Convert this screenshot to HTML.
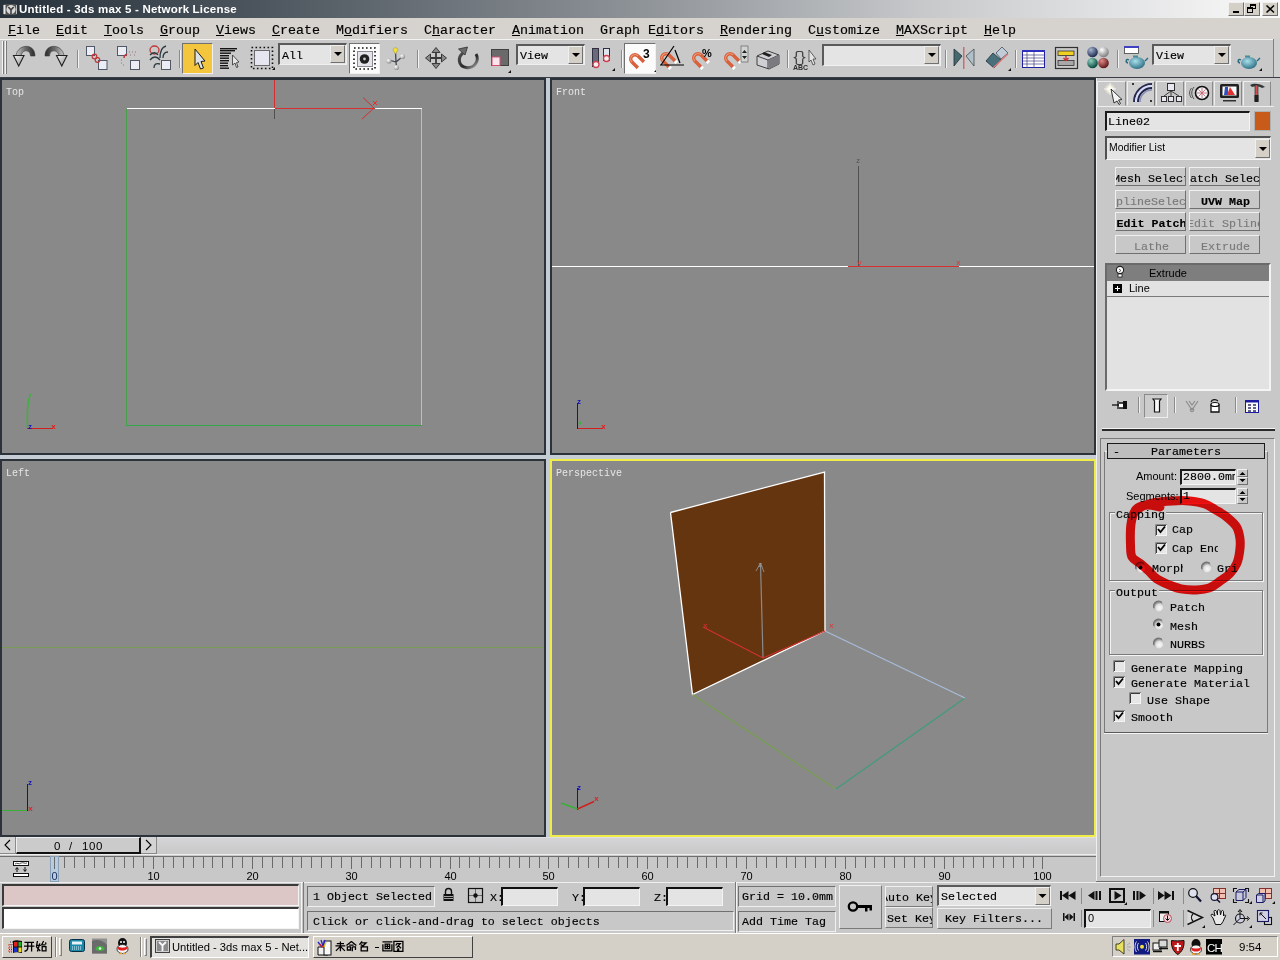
<!DOCTYPE html>
<html><head><meta charset="utf-8"><style>
html,body{margin:0;padding:0;}
body{width:1280px;height:960px;overflow:hidden;position:relative;background:#c8c8c8;font-family:"Liberation Sans",sans-serif;}
.a{position:absolute;}
.m{font-family:"Liberation Mono",monospace;white-space:pre;-webkit-text-stroke:0.15px currentColor;}
.s{font-family:"Liberation Sans",sans-serif;white-space:pre;}
.vp{position:absolute;background:#898989;border:2px solid #2c3239;box-sizing:border-box;}
.lbl{position:absolute;color:#e6e6e6;font-family:"Liberation Mono",monospace;font-size:10px;line-height:10px;}
.btn3d{position:absolute;box-sizing:border-box;background:#c8c8c8;border:1px solid;border-color:#f0f0f0 #707070 #707070 #f0f0f0;}
.sunk{position:absolute;box-sizing:border-box;border:1px solid;border-color:#606060 #f4f4f4 #f4f4f4 #606060;}
.sep{position:absolute;width:1px;border-left:1px solid #8a8a8a;border-right:1px solid #f4f4f4;}
u{text-decoration:underline;text-underline-offset:1px;text-decoration-thickness:1px;}
svg{position:absolute;overflow:visible;}
</style></head><body>

<!-- TITLE BAR -->
<div class="a" style="left:0;top:0;width:1280px;height:18px;background:linear-gradient(to right,#26313b 0%,#4c555d 20%,#8e9398 50%,#c6c8ca 72%,#fafafa 100%);"></div>
<svg style="left:2px;top:3px" width="16" height="13"><rect x="1" y="1" width="14" height="11" rx="2" fill="#505050"/><rect x="1.5" y="2" width="2" height="9" fill="#e8e8e8"/><circle cx="9" cy="6.5" r="4.6" fill="#d8d8d8"/><path d="M6.3 4 L9 6.8 L11.7 4 M9 6.8 V11" stroke="#404040" stroke-width="1.6" fill="none"/><rect x="14" y="2" width="1" height="9" fill="#c0c0c0"/></svg>
<div class="a s" style="left:19px;top:2px;font-size:11.5px;letter-spacing:0.2px;line-height:14px;font-weight:bold;color:#fff;">Untitled - 3ds max 5 - Network License</div>
<div class="btn3d" style="left:1228px;top:2px;width:16px;height:14px;background:#d4d0c8;"><div class="a" style="left:4px;top:8px;width:6px;height:2px;background:#000"></div></div>
<div class="btn3d" style="left:1244px;top:2px;width:16px;height:14px;background:#d4d0c8;"><div class="a" style="left:5px;top:1px;width:6px;height:5px;border:1px solid #000;border-top-width:2px;box-sizing:border-box"></div><div class="a" style="left:2px;top:4px;width:6px;height:6px;border:1px solid #000;border-top-width:2px;box-sizing:border-box;background:#d4d0c8"></div></div>
<div class="btn3d" style="left:1262px;top:2px;width:16px;height:14px;background:#d4d0c8;"><svg style="left:3px;top:2px" width="9" height="8"><path d="M0.5 0.5 L8 7.5 M8 0.5 L0.5 7.5" stroke="#000" stroke-width="1.6"/></svg></div>

<!-- MENU BAR -->
<div class="a" style="left:0;top:18px;width:1280px;height:21px;background:#d6d3ce;"></div>
<div class="a m" style="left:8px;top:23px;font-size:13.33px;line-height:16px;color:#000;"><u>F</u>ile  <u>E</u>dit  <u>T</u>ools  <u>G</u>roup  <u>V</u>iews  <u>C</u>reate  M<u>o</u>difiers  C<u>h</u>aracter  <u>A</u>nimation  Graph E<u>d</u>itors  <u>R</u>endering  C<u>u</u>stomize  <u>M</u>AXScript  <u>H</u>elp</div>

<!-- TOOLBAR -->
<div class="a" style="left:0;top:39px;width:1280px;height:38px;background:#c9c9c9;border-top:1px solid #f2f2f2;box-sizing:border-box;"></div>
<div class="a" style="left:0;top:77px;width:1280px;height:1px;background:#3a3d44;"></div>


<!-- toolbar boxes -->
<div class="a" style="left:182px;top:43px;width:31px;height:31px;background:#f4c63e;border:1px solid;border-color:#707070 #f0f0f0 #f0f0f0 #707070;box-sizing:border-box;"></div>
<div class="a" style="left:349px;top:43px;width:31px;height:31px;background:#fbfbfb;border:1px solid;border-color:#707070 #f0f0f0 #f0f0f0 #707070;box-sizing:border-box;"></div>
<div class="a" style="left:624px;top:43px;width:32px;height:31px;background:#fbfbfb;border:1px solid;border-color:#707070 #f0f0f0 #f0f0f0 #707070;box-sizing:border-box;"></div>
<div class="sunk" style="left:278px;top:43px;width:69px;height:22px;background:#e4e4e4;border-width:2px 1px 1px 2px;border-color:#5a5a5a #f0f0f0 #f0f0f0 #5a5a5a;"></div>
<div class="a m" style="left:282px;top:49px;font-size:11.67px;line-height:14px;">All</div>
<div class="btn3d" style="left:330px;top:45px;width:15px;height:18px;background:#d4d0c8;"></div>
<div class="sunk" style="left:516px;top:44px;width:69px;height:21px;background:#e4e4e4;border-width:2px 1px 1px 2px;border-color:#5a5a5a #f0f0f0 #f0f0f0 #5a5a5a;"></div>
<div class="a m" style="left:520px;top:49px;font-size:11.67px;line-height:14px;">View</div>
<div class="btn3d" style="left:568px;top:46px;width:15px;height:18px;background:#d4d0c8;"></div>
<div class="sunk" style="left:822px;top:44px;width:119px;height:22px;background:#e4e4e4;border-width:2px 1px 1px 2px;border-color:#5a5a5a #f0f0f0 #f0f0f0 #5a5a5a;"></div>
<div class="btn3d" style="left:924px;top:46px;width:15px;height:18px;background:#d4d0c8;"></div>
<div class="sunk" style="left:1152px;top:44px;width:79px;height:21px;background:#e4e4e4;border-width:2px 1px 1px 2px;border-color:#5a5a5a #f0f0f0 #f0f0f0 #5a5a5a;"></div>
<div class="a m" style="left:1156px;top:49px;font-size:11.67px;line-height:14px;">View</div>
<div class="btn3d" style="left:1214px;top:46px;width:15px;height:18px;background:#d4d0c8;"></div>
<div class="a" style="left:1273px;top:39px;width:1px;height:38px;background:#808080;"></div>
<div class="a" style="left:1274px;top:39px;width:6px;height:38px;background:#d0d0d0;"></div>

<svg style="left:0;top:0" width="1280" height="80">
<defs>
<linearGradient id="gArc" x1="0" y1="0" x2="0" y2="1"><stop offset="0" stop-color="#9a9a9a"/><stop offset="1" stop-color="#3a3a3a"/></linearGradient>
<radialGradient id="gBall" cx="0.35" cy="0.35" r="0.7"><stop offset="0" stop-color="#fff"/><stop offset="1" stop-color="#8a8a8a"/></radialGradient>
<radialGradient id="gB1" cx="0.35" cy="0.3" r="0.7"><stop offset="0" stop-color="#a8b4d0"/><stop offset="1" stop-color="#1e2c50"/></radialGradient>
<radialGradient id="gB2" cx="0.35" cy="0.3" r="0.7"><stop offset="0" stop-color="#ffffff"/><stop offset="1" stop-color="#808080"/></radialGradient>
<radialGradient id="gB3" cx="0.35" cy="0.3" r="0.7"><stop offset="0" stop-color="#8fd0c0"/><stop offset="1" stop-color="#0a4a40"/></radialGradient>
<radialGradient id="gB4" cx="0.35" cy="0.3" r="0.7"><stop offset="0" stop-color="#e08a8a"/><stop offset="1" stop-color="#601818"/></radialGradient>
<radialGradient id="gTea" cx="0.4" cy="0.35" r="0.7"><stop offset="0" stop-color="#a8e0ec"/><stop offset="1" stop-color="#2a6a80"/></radialGradient>
</defs>
<!-- grip -->
<rect x="2" y="41" width="1" height="33" fill="#f4f4f4"/><rect x="3" y="41" width="1" height="33" fill="#7a7a7a"/>
<rect x="5" y="41" width="1" height="33" fill="#f4f4f4"/><rect x="6" y="41" width="1" height="33" fill="#7a7a7a"/>
<!-- separators -->
<g fill="#8a8a8a"><rect x="77" y="50" width="1" height="18"/><rect x="179" y="50" width="1" height="18"/><rect x="417" y="50" width="1" height="18"/><rect x="621" y="50" width="1" height="18"/><rect x="787" y="50" width="1" height="18"/><rect x="945" y="50" width="1" height="18"/><rect x="1015" y="50" width="1" height="18"/><rect x="1117" y="50" width="1" height="18"/></g>
<g fill="#f4f4f4"><rect x="78" y="50" width="1" height="18"/><rect x="180" y="50" width="1" height="18"/><rect x="418" y="50" width="1" height="18"/><rect x="622" y="50" width="1" height="18"/><rect x="788" y="50" width="1" height="18"/><rect x="946" y="50" width="1" height="18"/><rect x="1016" y="50" width="1" height="18"/><rect x="1118" y="50" width="1" height="18"/></g>
<!-- undo / redo -->
<linearGradient id="gU1" x1="0" y1="0" x2="1" y2="0"><stop offset="0" stop-color="#c8c8c8"/><stop offset="0.5" stop-color="#6a6a6a"/><stop offset="1" stop-color="#2a2a2a"/></linearGradient>
<linearGradient id="gU2" x1="1" y1="0" x2="0" y2="0"><stop offset="0" stop-color="#c8c8c8"/><stop offset="0.5" stop-color="#6a6a6a"/><stop offset="1" stop-color="#2a2a2a"/></linearGradient>
<path d="M16 57 C16 44 35 42 35 56 L30.5 56 C30.5 49 21 49 21 57 Z" fill="url(#gU1)" stroke="#3a3a3a" stroke-width="0.6"/>
<linearGradient id="gAh" x1="0" y1="0" x2="1" y2="1"><stop offset="0" stop-color="#f4f4f4"/><stop offset="1" stop-color="#909090"/></linearGradient><path d="M13.5 55.5 L24 55.5 L18.7 66 Z" fill="url(#gAh)" stroke="#202020" stroke-width="1.1"/>
<path d="M64 57 C64 44 45 42 45 56 L49.5 56 C49.5 49 59 49 59 57 Z" fill="url(#gU2)" stroke="#3a3a3a" stroke-width="0.6"/>
<path d="M56.5 55.5 L67 55.5 L61.8 66 Z" fill="url(#gAh)" stroke="#202020" stroke-width="1.1"/>
<!-- link -->
<rect x="86.5" y="46.5" width="8" height="9" fill="#ececf4" stroke="#505868"/>
<rect x="98.5" y="60.5" width="8.5" height="9" fill="#ececf4" stroke="#505868"/>
<circle cx="94.5" cy="56.5" r="2.3" fill="none" stroke="#c03838" stroke-width="1.2"/><circle cx="97.5" cy="60" r="2.3" fill="none" stroke="#c03838" stroke-width="1.2"/>
<!-- unlink -->
<rect x="117.5" y="46.5" width="9" height="9" fill="#ececf4" stroke="#505868"/>
<rect x="130.5" y="60.5" width="9" height="9" fill="#ececf4" stroke="#505868"/>
<path d="M124 58 C124 55 126 54 127 55" stroke="#c03838" stroke-width="1.5" fill="none"/>
<path d="M129 52h1M132 52h1M135 52h1M130 55h1M134 55h1M121 60h1M121 63h1M123 65h1" stroke="#907070" stroke-width="1"/>
<!-- bind -->
<ellipse cx="154.5" cy="50" rx="4.5" ry="4" fill="none" stroke="#c03838" stroke-width="1.3"/>
<path d="M150 55 C153 52 156 52 158 55 M150 60 C153 56 157 56 160 60 M154 68 C154 64 156 63 160 64 M160 58 C160 50 162 47 166 46 M163 58 C163 53 165 52 168 52" stroke="#2a3a40" stroke-width="1.3" fill="none"/>
<rect x="161.5" y="60.5" width="9" height="9" fill="#ececf4" stroke="#505868"/>
<!-- select arrow -->
<path d="M195 49 L205 61 L201 61.5 L203.5 68 L200.5 69 L198 62.5 L195 65.5 Z" fill="#dde2e6" stroke="#1a1a1a" stroke-width="1"/>
<!-- select by name -->
<g fill="#141414"><rect x="220" y="48" width="17" height="1.4"/><rect x="220" y="50" width="15" height="1.4"/><rect x="220" y="52.5" width="11" height="1.4"/><rect x="220" y="55" width="9" height="1.4"/><rect x="220" y="57.5" width="9" height="1.4"/><rect x="220" y="60" width="9" height="1.4"/><rect x="220" y="62.5" width="8" height="1.4"/><rect x="220" y="65" width="8" height="1.4"/><rect x="220" y="67.5" width="9" height="1.4"/></g>
<path d="M232.5 55 L239 62 L236.5 62.5 L238 67 L236.5 67.5 L235 63 L232.5 65 Z" fill="#e6e6ea" stroke="#303030" stroke-width="0.8"/>
<!-- rect select -->
<rect x="251.5" y="47.5" width="21" height="21" fill="none" stroke="#111" stroke-width="1.6" stroke-dasharray="1.6 2.4"/>
<rect x="254.5" y="50.5" width="15" height="15" fill="#e6e6f0" stroke="#6a6a70"/>
<path d="M272 70 l3 0 l0 -3z" fill="#111"/>
<!-- All dropdown arrow -->
<path d="M334 52 h8 l-4 4z" fill="#000"/>
<!-- window/crossing -->
<rect x="354" y="48" width="21" height="21" fill="none" stroke="#111" stroke-width="1.6" stroke-dasharray="1.6 2.4"/>
<rect x="357.5" y="51.5" width="15" height="15" fill="#e4e4ea" stroke="#8a8a90"/>
<circle cx="364.5" cy="59" r="4.8" fill="#202020"/><circle cx="364.5" cy="59" r="1.4" fill="#c8c8c8"/>
<!-- manipulate -->
<path d="M395.5 52 L396 62 M389 60 L396 62 L402 57 M396 62 L396.5 67" stroke="#404850" stroke-width="1.3" fill="none"/>
<circle cx="389" cy="61" r="2.6" fill="url(#gBall)"/><circle cx="402.5" cy="56.5" r="2.6" fill="url(#gBall)"/><circle cx="396.5" cy="67.5" r="2.6" fill="url(#gBall)"/>
<path d="M393 50 L395.5 54 L398 50 C398 47 393 47 393 50Z" fill="#f0e040" stroke="#a09020" stroke-width="0.5"/>
<!-- move -->
<path d="M436 51 V65 M429 58 H443" stroke="#3a3a3a" stroke-width="1.8"/>
<path d="M436 47.5 L440 52.5 H432Z M436 68.5 L440 63.5 H432Z M425.5 58 L430.5 54 V62Z M446.5 58 L441.5 54 V62Z" fill="#8a8a8a" stroke="#3a3a3a" stroke-width="1"/>
<!-- rotate -->
<linearGradient id="gRot" x1="0" y1="0" x2="1" y2="1"><stop offset="0" stop-color="#505050"/><stop offset="0.6" stop-color="#2a2a2a"/><stop offset="1" stop-color="#b0b0b0"/></linearGradient>
<path d="M463 53 C457.5 57 458 66 466 67.5 C474 69 480 61 476 54" stroke="url(#gRot)" stroke-width="3" fill="none"/>
<path d="M458.5 49 L467.5 47 L465 55 Z" fill="#6a6a6a" stroke="#303030" stroke-width="0.8"/>
<!-- scale -->
<rect x="491.5" y="49.5" width="17" height="16" fill="#6a6a6a" stroke="#404040"/>
<rect x="492" y="57" width="8" height="8.5" fill="#fbe4ee" stroke="#d05070" stroke-width="1"/>
<path d="M508 73 l3 0 l0 -3z" fill="#111"/>
<!-- View dd arrow -->
<path d="M572 53 h8 l-4 4z" fill="#000"/>
<!-- pivot -->
<rect x="592.5" y="48.5" width="6" height="18" fill="#6a6a7a" stroke="#303040"/>
<rect x="603.5" y="48.5" width="6" height="12" fill="#dfe6f0" stroke="#303040"/>
<circle cx="596" cy="64.5" r="3" fill="#f0f0f0" stroke="#d04050" stroke-width="1.3"/><circle cx="606.5" cy="58.5" r="3" fill="#f0f0f0" stroke="#d04050" stroke-width="1.3"/>
<path d="M612 71 l3 0 l0 -3z" fill="#111"/>
<!-- magnets -->
<g transform="translate(635.0 59.0) rotate(-45)"><path d="M-4.3 8.5 V0 A4.3 4.3 0 0 1 4.3 0 V8.5" stroke="#d8603c" stroke-width="3.4" fill="none"/><path d="M-4.3 0 A4.3 4.3 0 0 1 4.3 0" stroke="#f0a080" stroke-width="1" fill="none"/><path d="M-4.3 8.5 V11 M4.3 8.5 V11" stroke="#ffffff" stroke-width="3.4"/></g><g transform="translate(666.0 58.0) rotate(-45)"><path d="M-4.3 8.5 V0 A4.3 4.3 0 0 1 4.3 0 V8.5" stroke="#d8603c" stroke-width="3.4" fill="none"/><path d="M-4.3 0 A4.3 4.3 0 0 1 4.3 0" stroke="#f0a080" stroke-width="1" fill="none"/><path d="M-4.3 8.5 V11 M4.3 8.5 V11" stroke="#ffffff" stroke-width="3.4"/></g><g transform="translate(698.0 58.0) rotate(-45)"><path d="M-4.3 8.5 V0 A4.3 4.3 0 0 1 4.3 0 V8.5" stroke="#d8603c" stroke-width="3.4" fill="none"/><path d="M-4.3 0 A4.3 4.3 0 0 1 4.3 0" stroke="#f0a080" stroke-width="1" fill="none"/><path d="M-4.3 8.5 V11 M4.3 8.5 V11" stroke="#ffffff" stroke-width="3.4"/></g><g transform="translate(730.0 58.0) rotate(-45)"><path d="M-4.3 8.5 V0 A4.3 4.3 0 0 1 4.3 0 V8.5" stroke="#d8603c" stroke-width="3.4" fill="none"/><path d="M-4.3 0 A4.3 4.3 0 0 1 4.3 0" stroke="#f0a080" stroke-width="1" fill="none"/><path d="M-4.3 8.5 V11 M4.3 8.5 V11" stroke="#ffffff" stroke-width="3.4"/></g>
<text x="643" y="58" font-family="Liberation Sans" font-weight="bold" font-size="12" fill="#000">3</text>
<path d="M654 72 l2 0 l0 -2z" fill="#111"/>
<path d="M660 65 L684 65 M661 65 L674 46 M675 50 L680 63" stroke="#000" stroke-width="1.2" fill="none"/>
<text x="702" y="57" font-family="Liberation Sans" font-weight="bold" font-size="11" fill="#000">%</text>
<rect x="741" y="46" width="7" height="16" fill="#d0d4d0" stroke="#505050" stroke-width="0.6"/>
<path d="M742 53 h5 l-2.5 -3z M742 56 h5 l-2.5 3z" fill="#202020"/>
<!-- named sel box -->
<path d="M757 56 L768 51 L779 55 L779 64 L769 69 L757 65 Z" fill="#cfcfd4" stroke="#404040" stroke-width="1"/>
<path d="M757 56 L768 60 L779 55 M768 60 L768 69" stroke="#404040" stroke-width="1" fill="none"/>
<path d="M768 60 L779 55 L779 64 L769 69Z" fill="#7a7a80"/>
<path d="M764 52 L772 55 L769 57 L762 54Z" fill="#202020"/>
<!-- {} ABC -->
<text x="792" y="62" font-family="Liberation Mono" font-size="15" fill="#404040" letter-spacing="-3">{}</text>
<text x="793" y="70" font-family="Liberation Sans" font-weight="bold" font-size="7" fill="#303030">ABC</text>
<path d="M809 50 L816 59 L813 59 L815 64 L813 65 L811 60 L809 62 Z" fill="#e4e4e4" stroke="#404040" stroke-width="0.8"/>
<path d="M928 53 h8 l-4 4z" fill="#000"/>
<!-- mirror -->
<path d="M954 49 L962 56 L954 66 Z" fill="#486870" stroke="#203038" stroke-width="0.8"/>
<path d="M974 49 L966 56 L974 66 Z" fill="#b0c0c8" stroke="#404a50" stroke-width="0.8"/>
<rect x="963" y="47" width="1.5" height="22" fill="#c87070"/>
<!-- align -->
<path d="M986 61 L993 53 L1001 60 L994 68 Z" fill="#48707a" stroke="#203040" stroke-width="0.8"/>
<path d="M996 53 L1002 47 L1008 53 L1001 59 Z" fill="#c0ccd8" stroke="#405060" stroke-width="0.8"/>
<path d="M993 68 L1008 54" stroke="#e07878" stroke-width="1.2"/>
<path d="M1008 71 l3 0 l0 -3z" fill="#111"/>
<!-- track view -->
<rect x="1022.5" y="50.5" width="22" height="17" fill="#fff" stroke="#2020a0"/>
<rect x="1022" y="50" width="23" height="2" fill="#3030c0"/>
<path d="M1023 55h21M1023 58h21M1023 61h21M1023 64h21M1027 52v16M1034 52v16" stroke="#404080" stroke-width="0.7"/>
<!-- schematic -->
<rect x="1055.5" y="47.5" width="22" height="21" fill="none" stroke="#303030" stroke-width="1.2"/>
<rect x="1058" y="51" width="16" height="4.5" fill="#f0d020" stroke="#303030" stroke-width="0.8"/>
<rect x="1058" y="60.5" width="16" height="5" fill="#a8a8a8" stroke="#303030" stroke-width="0.8"/>
<path d="M1066 56 V60 M1063.5 58 L1066 60.5 L1068.5 58" stroke="#d03030" stroke-width="1.4" fill="none"/>
<!-- material -->
<circle cx="1092.5" cy="52" r="5.3" fill="url(#gB1)"/><circle cx="1103.5" cy="52" r="5.3" fill="url(#gB2)"/>
<circle cx="1092.5" cy="63" r="5.3" fill="url(#gB3)"/><circle cx="1103.5" cy="63" r="5.3" fill="url(#gB4)"/>
<!-- render scene -->
<rect x="1124.5" y="46.5" width="14" height="7" fill="#fff" stroke="#404040" stroke-width="0.8"/>
<rect x="1124" y="46" width="15" height="2" fill="#4040c0"/>
<ellipse cx="1137" cy="63" rx="8" ry="6" fill="url(#gTea)"/>
<path d="M1129 60 C1126 58 1125 62 1128 63 M1145 61 L1148 58" stroke="#2a6a80" stroke-width="1.4" fill="none"/>
<rect x="1133" y="55.5" width="5" height="2" fill="#4a8a9a"/>
<path d="M1218 53 h8 l-4 4z" fill="#000"/>
<!-- quick render -->
<ellipse cx="1249" cy="63" rx="8" ry="6" fill="url(#gTea)"/>
<path d="M1241 60 C1238 58 1237 62 1240 63 M1257 61 L1260 58" stroke="#2a6a80" stroke-width="1.4" fill="none"/>
<rect x="1245" y="55.5" width="5" height="2" fill="#4a8a9a"/>
<path d="M1259 71 l3 0 l0 -3z" fill="#111"/>
</svg>


<!-- COMMAND PANEL -->
<div class="a" style="left:1096px;top:78px;width:184px;height:804px;background:#c8c8c8;"></div>
<div class="a" style="left:1096px;top:78px;width:1px;height:804px;background:#eeeeee;"></div>
<div class="a" style="left:1096px;top:106px;width:178px;height:1px;background:#eeeeee;"></div>
<div class="btn3d" style="left:1097px;top:81px;width:29px;height:25px;border-color:#eeeeee #8a8a8a #c8c8c8 #eeeeee;"></div>
<div class="btn3d" style="left:1127px;top:81px;width:28px;height:25px;background:#cfcfcf;border-color:#eeeeee #7a7a7a #c8c8c8 #eeeeee;"></div>
<div class="btn3d" style="left:1156px;top:81px;width:28px;height:25px;border-color:#eeeeee #8a8a8a #c8c8c8 #eeeeee;"></div>
<div class="btn3d" style="left:1185px;top:81px;width:28px;height:25px;border-color:#eeeeee #8a8a8a #c8c8c8 #eeeeee;"></div>
<div class="btn3d" style="left:1214px;top:81px;width:28px;height:25px;border-color:#eeeeee #8a8a8a #c8c8c8 #eeeeee;"></div>
<div class="btn3d" style="left:1243px;top:81px;width:28px;height:25px;border-color:#eeeeee #8a8a8a #c8c8c8 #eeeeee;"></div>

<div class="a" style="left:1105px;top:111px;width:145px;height:20px;background:#e4e4e4;border:1px solid;border-width:2px 1px 1px 2px;border-color:#1a1a1a #f4f4f4 #f4f4f4 #1a1a1a;box-sizing:border-box;"></div>
<div class="a m" style="left:1108px;top:116px;font-size:11.67px;line-height:13px;color:#000;">Line02</div>
<div class="a" style="left:1254px;top:111px;width:17px;height:20px;background:#c85a1a;border:1px solid #b0b0b0;box-sizing:border-box;"></div>
<div class="a" style="left:1105px;top:136px;width:166px;height:24px;background:#e4e4e4;border:1px solid;border-width:2px 1px 1px 2px;border-color:#505050 #f4f4f4 #f4f4f4 #505050;box-sizing:border-box;"></div>
<div class="a s" style="left:1109px;top:141px;font-size:10.4px;line-height:13px;color:#000;">Modifier List</div>
<div class="btn3d" style="left:1255px;top:139px;width:15px;height:19px;background:#d4d0c8;"></div>

<div class="btn3d" style="left:1115px;top:167px;width:71px;height:19px;overflow:hidden;"><div class="m" style="position:absolute;left:-3px;top:5px;width:77px;text-align:center;font-size:11.67px;line-height:13px;color:#000;">Mesh Select</div></div>
<div class="btn3d" style="left:1189px;top:167px;width:71px;height:19px;overflow:hidden;"><div class="m" style="position:absolute;left:-7px;top:5px;width:84px;text-align:center;font-size:11.67px;line-height:13px;color:#000;">Patch Select</div></div>
<div class="btn3d" style="left:1115px;top:190px;width:71px;height:19px;overflow:hidden;"><div class="m" style="position:absolute;left:-7px;top:5px;width:84px;text-align:center;font-size:11.67px;line-height:13px;color:#7a7a7a;">SplineSelect</div></div>
<div class="btn3d" style="left:1189px;top:190px;width:71px;height:19px;overflow:hidden;"><div class="m" style="position:absolute;left:0;top:5px;width:71px;text-align:center;font-size:11.67px;line-height:13px;font-weight:bold;color:#000;">UVW Map</div></div>
<div class="btn3d" style="left:1115px;top:212px;width:71px;height:19px;overflow:hidden;"><div class="m" style="position:absolute;left:0;top:5px;width:71px;text-align:center;font-size:11.67px;line-height:13px;font-weight:bold;color:#000;">Edit Patch</div></div>
<div class="btn3d" style="left:1189px;top:212px;width:71px;height:19px;overflow:hidden;"><div class="m" style="position:absolute;left:-3px;top:5px;width:77px;text-align:center;font-size:11.67px;line-height:13px;color:#7a7a7a;">Edit Spline</div></div>
<div class="btn3d" style="left:1115px;top:235px;width:71px;height:19px;overflow:hidden;"><div class="m" style="position:absolute;left:0;top:5px;width:71px;text-align:center;font-size:11.67px;line-height:13px;color:#7a7a7a;">Lathe</div></div>
<div class="btn3d" style="left:1189px;top:235px;width:71px;height:19px;overflow:hidden;"><div class="m" style="position:absolute;left:0;top:5px;width:71px;text-align:center;font-size:11.67px;line-height:13px;color:#7a7a7a;">Extrude</div></div>

<!-- stack -->
<div class="a" style="left:1105px;top:263px;width:166px;height:128px;background:#e2e2e2;border:1px solid;border-width:2px 2px 2px 2px;border-color:#6a6a6a #f4f4f4 #f4f4f4 #6a6a6a;box-sizing:border-box;"></div>
<div class="a" style="left:1107px;top:265px;width:162px;height:16px;background:#7e7e7e;"></div>
<div class="a s" style="left:1149px;top:267px;font-size:11px;line-height:13px;color:#000;">Extrude</div>
<div class="a" style="left:1107px;top:296px;width:162px;height:1px;background:#7a7a7a;"></div>
<div class="a" style="left:1113px;top:284px;width:9px;height:9px;background:#000;"></div>
<div class="a" style="left:1115px;top:288px;width:5px;height:1px;background:#fff;"></div>
<div class="a" style="left:1117px;top:286px;width:1px;height:5px;background:#fff;"></div>
<div class="a s" style="left:1129px;top:282px;font-size:11px;line-height:13px;color:#000;">Line</div>

<div class="a" style="left:1144px;top:394px;width:24px;height:24px;box-sizing:border-box;border:1px solid;border-color:#8a8a8a #eeeeee #eeeeee #8a8a8a;background:#cccccc;"></div>
<div class="a" style="left:1102px;top:428px;width:173px;height:1px;background:#f4f4f4;"></div>
<div class="a" style="left:1102px;top:429px;width:173px;height:2px;background:#2a2a2a;"></div>

<!-- rollout container -->
<div class="a" style="left:1100px;top:438px;width:175px;height:439px;box-sizing:border-box;border:1px solid;border-color:#7a7a7a #f2f2f2 #f2f2f2 #7a7a7a;"></div>
<div class="a" style="left:1104px;top:451px;width:164px;height:282px;box-sizing:border-box;border:1px solid;border-color:#f2f2f2 #7a7a7a #5a5a5a #7a7a7a;"></div>
<div class="a" style="left:1104px;top:733px;width:164px;height:1px;background:#f4f4f4;"></div>
<div class="a" style="left:1107px;top:443px;width:158px;height:16px;background:#bdbdbd;border:1px solid #1a1a1a;box-sizing:border-box;"></div>
<div class="a m" style="left:1113px;top:446px;font-size:11.67px;line-height:13px;color:#000;">-</div><div class="a m" style="left:1151px;top:446px;font-size:11.67px;line-height:13px;color:#000;">Parameters</div>

<div class="a s" style="left:1136px;top:470px;font-size:11px;line-height:13px;color:#000;">Amount:</div>
<div class="a" style="left:1180px;top:469px;width:56px;height:16px;background:#e4e4e4;border:1px solid;border-width:2px 1px 1px 2px;border-color:#1a1a1a #f4f4f4 #f4f4f4 #1a1a1a;box-sizing:border-box;overflow:hidden;"><div class="m" style="position:absolute;left:1px;top:0px;font-size:11.67px;line-height:13px;color:#000;">2800.0mm</div></div>
<div class="btn3d" style="left:1237px;top:469px;width:11px;height:8px;"></div>
<div class="btn3d" style="left:1237px;top:477px;width:11px;height:8px;"></div>
<div class="a s" style="left:1126px;top:490px;font-size:11px;line-height:13px;color:#000;">Segments:</div>
<div class="a" style="left:1180px;top:488px;width:56px;height:16px;background:#e4e4e4;border:1px solid;border-width:2px 1px 1px 2px;border-color:#1a1a1a #f4f4f4 #f4f4f4 #1a1a1a;box-sizing:border-box;"><div class="m" style="position:absolute;left:1px;top:0px;font-size:11.67px;line-height:13px;color:#000;">1</div></div>
<div class="btn3d" style="left:1237px;top:488px;width:11px;height:8px;"></div>
<div class="btn3d" style="left:1237px;top:496px;width:11px;height:8px;"></div>

<!-- capping group -->
<div class="a" style="left:1110px;top:513px;width:154px;height:69px;box-sizing:border-box;border:1px solid #f4f4f4;"></div><div class="a" style="left:1109px;top:512px;width:154px;height:69px;box-sizing:border-box;border:1px solid #7a7a7a;"></div>
<div class="a m" style="left:1115px;top:509px;font-size:11.67px;line-height:13px;color:#000;background:#c8c8c8;padding:0 1px;">Capping</div>
<div class="a m" style="left:1172px;top:524px;font-size:11.67px;line-height:13px;color:#000;">Cap</div>
<div class="a m" style="left:1172px;top:543px;width:46px;overflow:hidden;font-size:11.67px;line-height:13px;color:#000;">Cap End</div>
<div class="a m" style="left:1152px;top:563px;width:31px;overflow:hidden;font-size:11.67px;line-height:13px;color:#000;">Morph</div>
<div class="a m" style="left:1217px;top:563px;width:20px;overflow:hidden;font-size:11.67px;line-height:13px;color:#000;">Grid</div>

<div class="a" style="left:1110px;top:591px;width:154px;height:65px;box-sizing:border-box;border:1px solid #f4f4f4;"></div><div class="a" style="left:1109px;top:590px;width:154px;height:65px;box-sizing:border-box;border:1px solid #7a7a7a;"></div>
<div class="a m" style="left:1115px;top:587px;font-size:11.67px;line-height:13px;color:#000;background:#c8c8c8;padding:0 1px;">Output</div>
<div class="a m" style="left:1170px;top:602px;font-size:11.67px;line-height:13px;color:#000;">Patch</div>
<div class="a m" style="left:1170px;top:621px;font-size:11.67px;line-height:13px;color:#000;">Mesh</div>
<div class="a m" style="left:1170px;top:639px;font-size:11.67px;line-height:13px;color:#000;">NURBS</div>

<div class="a m" style="left:1131px;top:663px;font-size:11.67px;line-height:13px;color:#000;">Generate Mapping</div>
<div class="a m" style="left:1131px;top:678px;font-size:11.67px;line-height:13px;color:#000;">Generate Material</div>
<div class="a m" style="left:1147px;top:695px;font-size:11.67px;line-height:13px;color:#000;">Use Shape</div>
<div class="a m" style="left:1131px;top:712px;font-size:11.67px;line-height:13px;color:#000;">Smooth</div>


<!-- TIME SLIDER -->
<div class="a" style="left:0;top:837px;width:1096px;height:18px;background:linear-gradient(#d4d4d6,#c8c8c8);border-top:1px solid #e0e0e0;box-sizing:border-box;"></div>
<div class="a" style="left:0;top:837px;width:16px;height:17px;background:#d4d4d4;border-right:1px solid #8a8a8a;border-bottom:1px solid #8a8a8a;box-sizing:border-box;"></div>
<div class="a" style="left:16px;top:837px;width:125px;height:17px;background:#cbcbcb;border:1px solid;border-width:1px 2px 2px 1px;border-color:#f0f0f0 #101010 #101010 #f0f0f0;box-sizing:border-box;"></div>
<div class="a s" style="left:54px;top:840px;font-size:11.5px;line-height:12px;color:#000;">0</div><div class="a s" style="left:69px;top:840px;font-size:11.5px;line-height:12px;color:#000;">/</div><div class="a s" style="left:82px;top:840px;font-size:11.5px;line-height:12px;color:#000;letter-spacing:0.6px;">100</div>
<div class="a" style="left:141px;top:837px;width:16px;height:17px;background:#d4d4d4;border-right:1px solid #8a8a8a;border-bottom:1px solid #8a8a8a;box-sizing:border-box;"></div>

<!-- TRACK BAR -->
<div class="a" style="left:0;top:854px;width:1096px;height:29px;background:#c8c8c8;border-top:1px solid #eeeeee;box-sizing:border-box;"></div><div class="a" style="left:0;top:856px;width:1096px;height:1px;background:#6e6e6e;"></div>
<div class="a" style="left:50px;top:856px;width:9px;height:26px;background:#b8cce0;border:1px solid #8aa0b8;box-sizing:border-box;"></div>
<div class="a" style="left:0;top:882px;width:1096px;height:1px;background:#eeeeee;"></div>

<!-- STATUS BAR -->
<div class="a" style="left:0;top:883px;width:1280px;height:50px;background:#c8c8c8;"></div>
<div class="a" style="left:1096px;top:881px;width:184px;height:1px;background:#707070;"></div>
<div class="a" style="left:1096px;top:882px;width:184px;height:1px;background:#f0f0f0;"></div>
<div class="a" style="left:2px;top:884px;width:297px;height:22px;background:#dcc6c6;border:1px solid;border-width:2px 1px 1px 2px;border-color:#3a3a3a #f4f4f4 #f4f4f4 #3a3a3a;box-sizing:border-box;"></div>
<div class="a" style="left:2px;top:907px;width:297px;height:22px;background:#ffffff;border:1px solid;border-width:2px 1px 1px 2px;border-color:#3a3a3a #f4f4f4 #f4f4f4 #3a3a3a;box-sizing:border-box;"></div>
<div class="a" style="left:301px;top:882px;width:1px;height:51px;background:#f4f4f4;"></div>
<div class="a" style="left:303px;top:882px;width:1px;height:51px;background:#7a7a7a;"></div>
<div class="sunk" style="left:307px;top:886px;width:128px;height:21px;border-color:#707070 #f0f0f0 #f0f0f0 #707070;"></div>
<div class="a m" style="left:313px;top:891px;font-size:11.67px;line-height:13px;color:#000;">1 Object Selected</div>
<div class="sunk" style="left:307px;top:911px;width:427px;height:20px;border-color:#707070 #f0f0f0 #f0f0f0 #707070;"></div>
<div class="a m" style="left:313px;top:916px;font-size:11.67px;line-height:13px;color:#000;">Click or click-and-drag to select objects</div>
<div class="a m" style="left:490px;top:892px;font-size:11.67px;line-height:13px;color:#000;">X:</div>
<div class="a m" style="left:572px;top:892px;font-size:11.67px;line-height:13px;color:#000;">Y:</div>
<div class="a m" style="left:654px;top:892px;font-size:11.67px;line-height:13px;color:#000;">Z:</div>
<div class="a" style="left:501px;top:887px;width:57px;height:19px;background:#e4e4e4;border:1px solid;border-width:2px 1px 1px 2px;border-color:#101010 #f4f4f4 #f4f4f4 #101010;box-sizing:border-box;"></div>
<div class="a" style="left:583px;top:887px;width:57px;height:19px;background:#e4e4e4;border:1px solid;border-width:2px 1px 1px 2px;border-color:#101010 #f4f4f4 #f4f4f4 #101010;box-sizing:border-box;"></div>
<div class="a" style="left:666px;top:887px;width:57px;height:19px;background:#e4e4e4;border:1px solid;border-width:2px 1px 1px 2px;border-color:#101010 #f4f4f4 #f4f4f4 #101010;box-sizing:border-box;"></div>
<div class="a" style="left:735px;top:882px;width:1px;height:51px;background:#7a7a7a;"></div>
<div class="a" style="left:736px;top:882px;width:1px;height:51px;background:#f4f4f4;"></div>
<div class="sunk" style="left:738px;top:886px;width:98px;height:21px;border-color:#707070 #f0f0f0 #f0f0f0 #707070;"></div>
<div class="a m" style="left:742px;top:891px;font-size:11.67px;line-height:13px;color:#000;">Grid = 10.0mm</div>
<div class="sunk" style="left:738px;top:911px;width:98px;height:21px;border-color:#707070 #f0f0f0 #f0f0f0 #707070;"></div>
<div class="a m" style="left:742px;top:916px;font-size:11.67px;line-height:13px;color:#000;">Add Time Tag</div>
<div class="btn3d" style="left:839px;top:885px;width:43px;height:44px;border-color:#f0f0f0 #7a7a7a #7a7a7a #f0f0f0;"></div>
<div class="btn3d" style="left:885px;top:886px;width:48px;height:21px;overflow:hidden;border-color:#f0f0f0 #7a7a7a #7a7a7a #f0f0f0;"><div class="m" style="position:absolute;left:-5px;top:5px;font-size:11.67px;line-height:13px;color:#000;">Auto Key</div></div>
<div class="btn3d" style="left:885px;top:907px;width:48px;height:21px;overflow:hidden;border-color:#f0f0f0 #7a7a7a #7a7a7a #f0f0f0;"><div class="m" style="position:absolute;left:1px;top:5px;font-size:11.67px;line-height:13px;color:#000;">Set Key</div></div>
<div class="a" style="left:937px;top:885px;width:114px;height:21px;background:#e4e4e4;border:1px solid;border-width:2px 1px 1px 2px;border-color:#5a5a5a #f4f4f4 #f4f4f4 #5a5a5a;box-sizing:border-box;"></div>
<div class="a m" style="left:941px;top:891px;font-size:11.67px;line-height:13px;color:#000;">Selected</div>
<div class="btn3d" style="left:1035px;top:887px;width:15px;height:18px;background:#d4d0c8;"></div>
<div class="btn3d" style="left:937px;top:908px;width:115px;height:21px;border-color:#f0f0f0 #7a7a7a #7a7a7a #f0f0f0;"></div>
<div class="a m" style="left:945px;top:913px;font-size:11.67px;line-height:13px;color:#000;">Key Filters...</div>
<div class="a" style="left:1084px;top:909px;width:67px;height:19px;background:#e4e4e4;border:1px solid;border-width:2px 1px 1px 2px;border-color:#101010 #f4f4f4 #f4f4f4 #101010;box-sizing:border-box;"></div>
<div class="a s" style="left:1088px;top:912px;font-size:11px;line-height:13px;color:#000;">0</div>

<!-- TASKBAR -->
<div class="a" style="left:0;top:933px;width:1280px;height:27px;background:#d4d0c8;border-top:1px solid #ffffff;box-sizing:border-box;"></div>
<div class="btn3d" style="left:2px;top:936px;width:50px;height:22px;background:#d4d0c8;border-color:#ffffff #404040 #404040 #ffffff;"></div>
<div class="a" style="left:55px;top:937px;width:1px;height:20px;background:#808080;"></div>
<div class="a" style="left:56px;top:937px;width:1px;height:20px;background:#ffffff;"></div>
<div class="a" style="left:59px;top:938px;width:3px;height:18px;border:1px solid;border-color:#ffffff #808080 #808080 #ffffff;box-sizing:border-box;"></div>
<div class="a" style="left:140px;top:937px;width:1px;height:20px;background:#808080;"></div>
<div class="a" style="left:141px;top:937px;width:1px;height:20px;background:#ffffff;"></div>
<div class="a" style="left:144px;top:938px;width:3px;height:18px;border:1px solid;border-color:#ffffff #808080 #808080 #ffffff;box-sizing:border-box;"></div>
<div class="a" style="left:150px;top:936px;width:159px;height:22px;background:#e4e2de;border:1px solid;border-width:2px 1px 1px 2px;border-color:#404040 #ffffff #ffffff #404040;box-sizing:border-box;"></div>
<div class="a s" style="left:172px;top:940px;font-size:11.2px;line-height:14px;color:#000;">Untitled - 3ds max 5 - Net...</div>
<div class="btn3d" style="left:313px;top:936px;width:160px;height:22px;background:#d4d0c8;border-color:#ffffff #404040 #404040 #ffffff;"></div>
<div class="a" style="left:1112px;top:936px;width:166px;height:21px;border:1px solid;border-color:#808080 #ffffff #ffffff #808080;box-sizing:border-box;"></div>
<div class="a s" style="left:1239px;top:941px;font-size:11.5px;line-height:13px;color:#000;">9:54</div>

<!-- VIEWPORTS -->
<div class="a" style="left:0;top:78px;width:1096px;height:759px;background:#c6ccd3;"></div>
<div class="vp" style="left:0;top:78px;width:546px;height:377px;"></div>
<div class="vp" style="left:550px;top:78px;width:546px;height:377px;"></div>
<div class="vp" style="left:0;top:459px;width:546px;height:378px;"></div>
<div class="vp" style="left:550px;top:459px;width:546px;height:378px;border-color:#f0ec48;"></div>

<div class="lbl" style="left:6px;top:88px;">Top</div>
<div class="lbl" style="left:556px;top:88px;">Front</div>
<div class="lbl" style="left:6px;top:469px;">Left</div>
<div class="lbl" style="left:556px;top:469px;">Perspective</div>


<svg style="left:0;top:0" width="1280" height="960" shape-rendering="crispEdges">
<!-- TOP viewport -->
<rect x="127" y="108" width="295" height="1" fill="#ffffff"/>
<rect x="126" y="109" width="1" height="317" fill="#4aa04a"/>
<rect x="126" y="425" width="296" height="1" fill="#30a848"/>
<rect x="421" y="109" width="1" height="316" fill="#a8c4dc"/>
<rect x="274" y="80" width="1" height="28" fill="#d83030"/>
<rect x="274" y="109" width="1" height="10" fill="#505050"/>
<rect x="275" y="108" width="100" height="1" fill="#d83030"/>
<!-- Front viewport -->
<rect x="552" y="266" width="542" height="1" fill="#ffffff"/>
<rect x="848" y="266" width="111" height="1" fill="#d83030"/>
<rect x="858" y="166" width="1" height="100" fill="#505050"/>
<!-- Left viewport -->
<rect x="2" y="647" width="542" height="1" fill="#7a9c58"/>
<!-- tripods -->
<rect x="27" y="428" width="26" height="1" fill="#d02020"/>
<rect x="577" y="403" width="1" height="26" fill="#1010a0"/>
<rect x="578" y="428" width="25" height="1" fill="#d02020"/>
<rect x="27" y="784" width="1" height="27" fill="#1010a0"/>
<rect x="2" y="810" width="25" height="1" fill="#38b038"/>
<rect x="577" y="788" width="1" height="22" fill="#1010a0"/>
</svg>
<svg style="left:0;top:0" width="1280" height="960">
<path d="M363 97.5 L374 108 L362 119" stroke="#d03030" stroke-width="1" fill="none"/>
<path d="M373 101 l4 4 M377 101 l-4 4" stroke="#e03030" stroke-width="1"/>
<path d="M27.5 428 C27 415 28 400 30.5 394" stroke="#40b040" stroke-width="1.6" fill="none"/>
<text x="28" y="429" font-family="Liberation Mono" font-weight="bold" font-size="7" fill="#1010c0">z</text>
<text x="51" y="429" font-family="Liberation Mono" font-weight="bold" font-size="8" fill="#e02020">x</text>
<text x="577" y="404" font-family="Liberation Mono" font-weight="bold" font-size="7" fill="#1010c0">z</text>
<text x="601" y="429" font-family="Liberation Mono" font-weight="bold" font-size="8" fill="#e02020">x</text>
<circle cx="580" cy="423" r="1.5" fill="#40b040"/>
<text x="856" y="163" font-family="Liberation Mono" font-size="7" fill="#505050">z</text>
<text x="857" y="265" font-family="Liberation Mono" font-size="8" fill="#e03030">y</text>
<text x="956" y="265" font-family="Liberation Mono" font-size="8" fill="#e03030">x</text>
<text x="28" y="785" font-family="Liberation Mono" font-weight="bold" font-size="7" fill="#1010c0">z</text>
<text x="28" y="811" font-family="Liberation Mono" font-weight="bold" font-size="8" fill="#e02020">x</text>
<!-- perspective -->
<polygon points="670.5,512.5 824.5,472 825,631 692.5,694.5" fill="#653510"/>
<path d="M670.5 512.5 L824.5 472 L825 631 M670.5 512.5 L692.5 694.5 L825 631" stroke="#ffffff" stroke-width="1.3" fill="none"/>
<path d="M692.5 694.5 L836 789" stroke="#78a050" stroke-width="1.2" fill="none"/>
<path d="M836 789 L965 698" stroke="#409c78" stroke-width="1.2" fill="none"/>
<path d="M965 698 L825 631" stroke="#a8bcd8" stroke-width="1.2" fill="none"/>
<path d="M763 658 L760.5 563" stroke="#8a8a8a" stroke-width="1.2" fill="none"/>
<path d="M756 571 L760.5 563 L764 572" stroke="#8a8a8a" stroke-width="1" fill="none"/>
<path d="M763 658 L703 627 M763 658 L825 631" stroke="#d03030" stroke-width="1.2" fill="none"/>
<text x="758" y="567" font-family="Liberation Mono" font-size="7" fill="#9a9a9a">z</text>
<text x="703" y="628" font-family="Liberation Mono" font-size="8" fill="#e03030">x</text>
<text x="829" y="628" font-family="Liberation Mono" font-size="8" fill="#e03030">x</text>
<path d="M577.5 809 L594 801.5" stroke="#d02020" stroke-width="1.5" fill="none"/>
<path d="M577.5 809 L561 803" stroke="#38b038" stroke-width="1.8" fill="none"/>
<text x="577" y="790" font-family="Liberation Mono" font-weight="bold" font-size="7" fill="#1010c0">z</text>
<text x="594" y="801" font-family="Liberation Mono" font-weight="bold" font-size="8" fill="#e02020">x</text>
</svg>


<svg style="left:0;top:0" width="1280" height="960">
<defs>
<radialGradient id="gRad" cx="0.6" cy="0.65" r="0.6"><stop offset="0" stop-color="#fafafa"/><stop offset="0.6" stop-color="#e0e0e0"/><stop offset="1" stop-color="#8a8a8a"/></radialGradient>
<linearGradient id="gArc2" x1="0" y1="1" x2="1" y2="0"><stop offset="0" stop-color="#30305a"/><stop offset="0.5" stop-color="#c8d0f0"/><stop offset="1" stop-color="#20204a"/></linearGradient>
</defs>
<!-- tab icons -->
<radialGradient id="gSpark" cx="0.5" cy="0.5" r="0.5"><stop offset="0" stop-color="#ffffff"/><stop offset="0.4" stop-color="#fffbe8" stop-opacity="0.9"/><stop offset="1" stop-color="#e8e4d0" stop-opacity="0"/></radialGradient>
<circle cx="1110" cy="89" r="6" fill="url(#gSpark)"/>
<path d="M1110 83 V95 M1104 89 H1116" stroke="#ffffff" stroke-width="0.8"/>
<path d="M1111 89 L1122 99.5 L1118.5 100 L1120.5 103.5 L1119 104.5 L1117 101 L1114 103 Z" fill="#f4f4f4" stroke="#202020" stroke-width="0.9"/>
<path d="M1134 102 A18 18 0 0 1 1152 84" stroke="#2a2a50" stroke-width="2" fill="none"/>
<path d="M1136 102 A16 16 0 0 1 1152 86" stroke="#d8def8" stroke-width="2" fill="none"/>
<path d="M1138 102 A14 14 0 0 1 1152 88" stroke="#24244a" stroke-width="2" fill="none"/>
<path d="M1140 102 A12 12 0 0 1 1152 90" stroke="#8890b8" stroke-width="1.6" fill="none"/>
<circle cx="1133" cy="84" r="1" fill="#000"/><circle cx="1151" cy="101" r="1" fill="#000"/>
<rect x="1167.5" y="83.5" width="7" height="7" fill="#e8e8f0" stroke="#303030"/>
<rect x="1161.5" y="96.5" width="5" height="5" fill="#e8e8f0" stroke="#303030"/>
<rect x="1168.5" y="96.5" width="5" height="5" fill="#e8e8f0" stroke="#303030"/>
<rect x="1176.5" y="96.5" width="5" height="5" fill="#e8e8f0" stroke="#303030"/>
<path d="M1171 91 L1164 96 M1171 91 V96 M1171 91 L1179 96" stroke="#303030" stroke-width="0.9"/>
<circle cx="1202" cy="93" r="6.5" fill="#f4f4f4" stroke="#101010" stroke-width="1.6"/>
<path d="M1202 88 V98 M1197 93 H1207 M1198.5 89.5 L1205.5 96.5 M1205.5 89.5 L1198.5 96.5" stroke="#c06070" stroke-width="0.8"/>
<path d="M1194 87 C1191 91 1191 95 1194 99 M1191.5 88 C1189 91 1189 95 1191.5 98" stroke="#303030" stroke-width="0.8" fill="none"/>
<rect x="1220" y="84" width="19" height="14" rx="1.5" fill="#202020"/>
<rect x="1222.5" y="86.5" width="14" height="9" fill="#fafafa"/>
<path d="M1224 95 L1225 87 L1228 87 L1228 95Z" fill="#3050c0"/>
<path d="M1227 95 L1230 87 L1235 95Z" fill="#e03030"/>
<rect x="1223" y="100" width="13" height="1.5" fill="#303030"/>
<path d="M1250 85 C1253 83 1260 83 1265 87 L1262 88 C1259 86 1255 86 1252 87Z" fill="#303838"/>
<rect x="1255" y="85" width="3" height="16" fill="#d05050" stroke="#202020" stroke-width="0.6"/>
<rect x="1254.5" y="95" width="4" height="7" fill="#202020"/>
<!-- modifier list arrow -->
<path d="M1259 147 h8 l-4 4z" fill="#000"/>
<!-- stack bulb -->
<circle cx="1120" cy="270" r="3.6" fill="#fff" stroke="#202020" stroke-width="1.1"/>
<rect x="1118" y="274" width="4" height="3" fill="#fff" stroke="#202020" stroke-width="0.8"/>
<path d="M1119 269 l2 1.5 l-2 1.5" stroke="#202020" stroke-width="0.7" fill="none"/>
<!-- stack bottom icons -->
<path d="M1112 405 H1119" stroke="#101010" stroke-width="1.3"/>
<path d="M1118 401 V409 M1119 403 H1125 V408 H1119" stroke="#101010" stroke-width="1.3" fill="#fff"/>
<rect x="1123" y="401" width="4" height="8" fill="#101010"/>
<rect x="1138" y="397" width="1" height="16" fill="#8a8a8a"/><rect x="1139" y="397" width="1" height="16" fill="#f0f0f0"/>
<rect x="1174" y="397" width="1" height="16" fill="#8a8a8a"/><rect x="1175" y="397" width="1" height="16" fill="#f0f0f0"/>
<rect x="1235" y="397" width="1" height="16" fill="#8a8a8a"/><rect x="1236" y="397" width="1" height="16" fill="#f0f0f0"/>
<path d="M1153 399 H1161 L1159.5 401 V412 H1154.5 V401 Z" fill="#f8f8f8" stroke="#101010" stroke-width="1.2"/>
<path d="M1186 401 L1192 410 L1198 401 M1189 401 L1192 405 L1195 401" stroke="#8a8a8a" stroke-width="1.1" fill="none"/>
<circle cx="1192" cy="410" r="1.8" fill="none" stroke="#8a8a8a"/>
<path d="M1211 405 V412 H1219 V405 Z" fill="#fff" stroke="#101010" stroke-width="1.3"/>
<ellipse cx="1215" cy="404.5" rx="4" ry="2" fill="#fff" stroke="#101010" stroke-width="1.2"/>
<path d="M1211 402 C1212 399 1216 399 1218 401" stroke="#101010" stroke-width="1.2" fill="none"/>
<rect x="1245.5" y="400.5" width="13" height="12" fill="#fafafa" stroke="#1a1aa0" stroke-width="1"/>
<rect x="1245" y="400" width="14" height="2.5" fill="#1a1aa0"/>
<path d="M1248 405h3M1253 405h3M1248 408h3M1253 408h3M1248 411h3M1253 411h3" stroke="#303060" stroke-width="1.5"/>
<!-- spinner arrows -->
<path d="M1239.5 475 h6 l-3 -3z M1239.5 479 h6 l-3 3z" fill="#000"/>
<path d="M1239.5 494 h6 l-3 -3z M1239.5 498 h6 l-3 3z" fill="#000"/>
<!-- checkboxes -->
<rect x="1155" y="524" width="12" height="12" fill="#f4f4f4"/><rect x="1155" y="524" width="11" height="11" fill="#e6e6e6"/><path d="M1155.5 536 V524.5 H1167" stroke="#8a8a8a" stroke-width="1" fill="none"/><path d="M1156.5 535 V525.5 H1166" stroke="#3a3a3a" stroke-width="1" fill="none"/><rect x="1155" y="542" width="12" height="12" fill="#f4f4f4"/><rect x="1155" y="542" width="11" height="11" fill="#e6e6e6"/><path d="M1155.5 554 V542.5 H1167" stroke="#8a8a8a" stroke-width="1" fill="none"/><path d="M1156.5 553 V543.5 H1166" stroke="#3a3a3a" stroke-width="1" fill="none"/><rect x="1113" y="660" width="12" height="12" fill="#f4f4f4"/><rect x="1113" y="660" width="11" height="11" fill="#e6e6e6"/><path d="M1113.5 672 V660.5 H1125" stroke="#8a8a8a" stroke-width="1" fill="none"/><path d="M1114.5 671 V661.5 H1124" stroke="#3a3a3a" stroke-width="1" fill="none"/><rect x="1113" y="676" width="12" height="12" fill="#f4f4f4"/><rect x="1113" y="676" width="11" height="11" fill="#e6e6e6"/><path d="M1113.5 688 V676.5 H1125" stroke="#8a8a8a" stroke-width="1" fill="none"/><path d="M1114.5 687 V677.5 H1124" stroke="#3a3a3a" stroke-width="1" fill="none"/><rect x="1129" y="692" width="12" height="12" fill="#f4f4f4"/><rect x="1129" y="692" width="11" height="11" fill="#e6e6e6"/><path d="M1129.5 704 V692.5 H1141" stroke="#8a8a8a" stroke-width="1" fill="none"/><path d="M1130.5 703 V693.5 H1140" stroke="#3a3a3a" stroke-width="1" fill="none"/><rect x="1113" y="710" width="12" height="12" fill="#f4f4f4"/><rect x="1113" y="710" width="11" height="11" fill="#e6e6e6"/><path d="M1113.5 722 V710.5 H1125" stroke="#8a8a8a" stroke-width="1" fill="none"/><path d="M1114.5 721 V711.5 H1124" stroke="#3a3a3a" stroke-width="1" fill="none"/>
<g stroke="#000" stroke-width="1.8" fill="none">
<path d="M1158 529 L1160.5 532 L1165 526.5"/>
<path d="M1158 547 L1160.5 550 L1165 544.5"/>
<path d="M1116 681 L1118.5 684 L1123 678.5"/>
<path d="M1116 715 L1118.5 718 L1123 712.5"/>
</g>
<!-- radios -->
<g>
<circle cx="1140.5" cy="567.5" r="5" fill="url(#gRad)"/>
<circle cx="1206.5" cy="567.5" r="5" fill="url(#gRad)"/>
<circle cx="1158.5" cy="606.5" r="5" fill="url(#gRad)"/>
<circle cx="1158.5" cy="624.5" r="5" fill="url(#gRad)"/>
<circle cx="1158.5" cy="643.5" r="5" fill="url(#gRad)"/>
<path d="M1136 569 A5 5 0 0 1 1144 563.5" stroke="#707070" stroke-width="1.2" fill="none"/>
<path d="M1202 569 A5 5 0 0 1 1210 563.5" stroke="#707070" stroke-width="1.2" fill="none"/>
<path d="M1154 608 A5 5 0 0 1 1162 602.5" stroke="#707070" stroke-width="1.2" fill="none"/>
<path d="M1154 626 A5 5 0 0 1 1162 620.5" stroke="#707070" stroke-width="1.2" fill="none"/>
<path d="M1154 645 A5 5 0 0 1 1162 639.5" stroke="#707070" stroke-width="1.2" fill="none"/>
<circle cx="1140.5" cy="567.5" r="2" fill="#000"/>
<circle cx="1158.5" cy="624.5" r="2" fill="#000"/>
</g>
<!-- red circle annotation -->
<path d="M1160.0 507.0 C1157.8 506.7 1151.0 504.6 1147.0 505.0 C1143.0 505.4 1138.7 506.3 1136.0 509.5 C1133.3 512.7 1131.9 518.1 1131.0 524.0 C1130.1 529.9 1130.3 539.5 1130.5 545.0 C1130.7 550.5 1130.4 553.9 1132.0 557.0 C1133.6 560.1 1137.6 561.2 1140.3 563.5 C1143.0 565.8 1145.7 568.1 1148.4 570.6 C1151.1 573.1 1153.2 576.4 1156.6 578.8 C1160.0 581.2 1164.7 583.1 1168.8 584.8 C1172.9 586.5 1176.4 588.0 1181.0 588.9 C1185.6 589.8 1191.5 590.1 1196.2 589.9 C1200.9 589.7 1205.4 589.4 1209.4 587.9 C1213.5 586.4 1217.1 583.2 1220.5 580.8 C1223.9 578.4 1227.0 576.6 1229.7 573.7 C1232.4 570.8 1235.1 567.4 1236.8 563.5 C1238.5 559.6 1239.3 554.5 1239.8 550.3 C1240.3 546.1 1240.5 542.0 1239.9 538.1 C1239.3 534.2 1238.5 530.1 1236.4 526.7 C1234.3 523.3 1230.7 520.3 1227.3 517.5 C1223.9 514.7 1219.6 512.3 1215.8 510.0 C1212.0 507.7 1208.7 505.2 1204.3 503.7 C1199.9 502.2 1194.8 501.4 1189.5 500.9 C1184.2 500.4 1178.0 500.6 1172.3 500.9 C1166.5 501.2 1159.9 501.6 1155.0 502.5 C1150.1 503.4 1146.2 504.6 1143.0 506.0 C1139.8 507.4 1137.2 510.2 1136.0 511.0" stroke="#ff1010" stroke-width="9" fill="none" stroke-linecap="round" stroke-linejoin="round" style="mix-blend-mode:multiply"/>
</svg>


<svg style="left:0;top:0" width="1280" height="960">
<g shape-rendering="crispEdges"><rect x="54" y="857" width="1" height="12" fill="#6a6a6a"/><rect x="64" y="857" width="1" height="11" fill="#6a6a6a"/><rect x="74" y="857" width="1" height="11" fill="#6a6a6a"/><rect x="84" y="857" width="1" height="11" fill="#6a6a6a"/><rect x="94" y="857" width="1" height="11" fill="#6a6a6a"/><rect x="104" y="857" width="1" height="11" fill="#6a6a6a"/><rect x="114" y="857" width="1" height="11" fill="#6a6a6a"/><rect x="124" y="857" width="1" height="11" fill="#6a6a6a"/><rect x="133" y="857" width="1" height="11" fill="#6a6a6a"/><rect x="143" y="857" width="1" height="11" fill="#6a6a6a"/><rect x="153" y="857" width="1" height="12" fill="#6a6a6a"/><rect x="163" y="857" width="1" height="11" fill="#6a6a6a"/><rect x="173" y="857" width="1" height="11" fill="#6a6a6a"/><rect x="183" y="857" width="1" height="11" fill="#6a6a6a"/><rect x="193" y="857" width="1" height="11" fill="#6a6a6a"/><rect x="203" y="857" width="1" height="11" fill="#6a6a6a"/><rect x="212" y="857" width="1" height="11" fill="#6a6a6a"/><rect x="222" y="857" width="1" height="11" fill="#6a6a6a"/><rect x="232" y="857" width="1" height="11" fill="#6a6a6a"/><rect x="242" y="857" width="1" height="11" fill="#6a6a6a"/><rect x="252" y="857" width="1" height="12" fill="#6a6a6a"/><rect x="262" y="857" width="1" height="11" fill="#6a6a6a"/><rect x="272" y="857" width="1" height="11" fill="#6a6a6a"/><rect x="282" y="857" width="1" height="11" fill="#6a6a6a"/><rect x="292" y="857" width="1" height="11" fill="#6a6a6a"/><rect x="301" y="857" width="1" height="11" fill="#6a6a6a"/><rect x="311" y="857" width="1" height="11" fill="#6a6a6a"/><rect x="321" y="857" width="1" height="11" fill="#6a6a6a"/><rect x="331" y="857" width="1" height="11" fill="#6a6a6a"/><rect x="341" y="857" width="1" height="11" fill="#6a6a6a"/><rect x="351" y="857" width="1" height="12" fill="#6a6a6a"/><rect x="361" y="857" width="1" height="11" fill="#6a6a6a"/><rect x="371" y="857" width="1" height="11" fill="#6a6a6a"/><rect x="380" y="857" width="1" height="11" fill="#6a6a6a"/><rect x="390" y="857" width="1" height="11" fill="#6a6a6a"/><rect x="400" y="857" width="1" height="11" fill="#6a6a6a"/><rect x="410" y="857" width="1" height="11" fill="#6a6a6a"/><rect x="420" y="857" width="1" height="11" fill="#6a6a6a"/><rect x="430" y="857" width="1" height="11" fill="#6a6a6a"/><rect x="440" y="857" width="1" height="11" fill="#6a6a6a"/><rect x="450" y="857" width="1" height="12" fill="#6a6a6a"/><rect x="459" y="857" width="1" height="11" fill="#6a6a6a"/><rect x="469" y="857" width="1" height="11" fill="#6a6a6a"/><rect x="479" y="857" width="1" height="11" fill="#6a6a6a"/><rect x="489" y="857" width="1" height="11" fill="#6a6a6a"/><rect x="499" y="857" width="1" height="11" fill="#6a6a6a"/><rect x="509" y="857" width="1" height="11" fill="#6a6a6a"/><rect x="519" y="857" width="1" height="11" fill="#6a6a6a"/><rect x="529" y="857" width="1" height="11" fill="#6a6a6a"/><rect x="539" y="857" width="1" height="11" fill="#6a6a6a"/><rect x="548" y="857" width="1" height="12" fill="#6a6a6a"/><rect x="558" y="857" width="1" height="11" fill="#6a6a6a"/><rect x="568" y="857" width="1" height="11" fill="#6a6a6a"/><rect x="578" y="857" width="1" height="11" fill="#6a6a6a"/><rect x="588" y="857" width="1" height="11" fill="#6a6a6a"/><rect x="598" y="857" width="1" height="11" fill="#6a6a6a"/><rect x="608" y="857" width="1" height="11" fill="#6a6a6a"/><rect x="618" y="857" width="1" height="11" fill="#6a6a6a"/><rect x="627" y="857" width="1" height="11" fill="#6a6a6a"/><rect x="637" y="857" width="1" height="11" fill="#6a6a6a"/><rect x="647" y="857" width="1" height="12" fill="#6a6a6a"/><rect x="657" y="857" width="1" height="11" fill="#6a6a6a"/><rect x="667" y="857" width="1" height="11" fill="#6a6a6a"/><rect x="677" y="857" width="1" height="11" fill="#6a6a6a"/><rect x="687" y="857" width="1" height="11" fill="#6a6a6a"/><rect x="697" y="857" width="1" height="11" fill="#6a6a6a"/><rect x="706" y="857" width="1" height="11" fill="#6a6a6a"/><rect x="716" y="857" width="1" height="11" fill="#6a6a6a"/><rect x="726" y="857" width="1" height="11" fill="#6a6a6a"/><rect x="736" y="857" width="1" height="11" fill="#6a6a6a"/><rect x="746" y="857" width="1" height="12" fill="#6a6a6a"/><rect x="756" y="857" width="1" height="11" fill="#6a6a6a"/><rect x="766" y="857" width="1" height="11" fill="#6a6a6a"/><rect x="776" y="857" width="1" height="11" fill="#6a6a6a"/><rect x="786" y="857" width="1" height="11" fill="#6a6a6a"/><rect x="795" y="857" width="1" height="11" fill="#6a6a6a"/><rect x="805" y="857" width="1" height="11" fill="#6a6a6a"/><rect x="815" y="857" width="1" height="11" fill="#6a6a6a"/><rect x="825" y="857" width="1" height="11" fill="#6a6a6a"/><rect x="835" y="857" width="1" height="11" fill="#6a6a6a"/><rect x="845" y="857" width="1" height="12" fill="#6a6a6a"/><rect x="855" y="857" width="1" height="11" fill="#6a6a6a"/><rect x="865" y="857" width="1" height="11" fill="#6a6a6a"/><rect x="874" y="857" width="1" height="11" fill="#6a6a6a"/><rect x="884" y="857" width="1" height="11" fill="#6a6a6a"/><rect x="894" y="857" width="1" height="11" fill="#6a6a6a"/><rect x="904" y="857" width="1" height="11" fill="#6a6a6a"/><rect x="914" y="857" width="1" height="11" fill="#6a6a6a"/><rect x="924" y="857" width="1" height="11" fill="#6a6a6a"/><rect x="934" y="857" width="1" height="11" fill="#6a6a6a"/><rect x="944" y="857" width="1" height="12" fill="#6a6a6a"/><rect x="953" y="857" width="1" height="11" fill="#6a6a6a"/><rect x="963" y="857" width="1" height="11" fill="#6a6a6a"/><rect x="973" y="857" width="1" height="11" fill="#6a6a6a"/><rect x="983" y="857" width="1" height="11" fill="#6a6a6a"/><rect x="993" y="857" width="1" height="11" fill="#6a6a6a"/><rect x="1003" y="857" width="1" height="11" fill="#6a6a6a"/><rect x="1013" y="857" width="1" height="11" fill="#6a6a6a"/><rect x="1023" y="857" width="1" height="11" fill="#6a6a6a"/><rect x="1033" y="857" width="1" height="11" fill="#6a6a6a"/><rect x="1042" y="857" width="1" height="12" fill="#6a6a6a"/></g>
<text x="54.5" y="879.5" text-anchor="middle" font-family="Liberation Sans" font-size="11" fill="#1a3060">0</text><text x="153.5" y="879.5" text-anchor="middle" font-family="Liberation Sans" font-size="11" fill="#000">10</text><text x="252.5" y="879.5" text-anchor="middle" font-family="Liberation Sans" font-size="11" fill="#000">20</text><text x="351.5" y="879.5" text-anchor="middle" font-family="Liberation Sans" font-size="11" fill="#000">30</text><text x="450.5" y="879.5" text-anchor="middle" font-family="Liberation Sans" font-size="11" fill="#000">40</text><text x="548.5" y="879.5" text-anchor="middle" font-family="Liberation Sans" font-size="11" fill="#000">50</text><text x="647.5" y="879.5" text-anchor="middle" font-family="Liberation Sans" font-size="11" fill="#000">60</text><text x="746.5" y="879.5" text-anchor="middle" font-family="Liberation Sans" font-size="11" fill="#000">70</text><text x="845.5" y="879.5" text-anchor="middle" font-family="Liberation Sans" font-size="11" fill="#000">80</text><text x="944.5" y="879.5" text-anchor="middle" font-family="Liberation Sans" font-size="11" fill="#000">90</text><text x="1042.5" y="879.5" text-anchor="middle" font-family="Liberation Sans" font-size="11" fill="#000">100</text>
<!-- < > -->
<path d="M10 840 L5 845 L10 850" stroke="#000" stroke-width="1.1" fill="none"/>
<path d="M146 840 L151 845 L146 850" stroke="#000" stroke-width="1.1" fill="none"/>
<!-- track bar icon -->
<rect x="13.5" y="861.5" width="15" height="4" fill="#fff" stroke="#101010" stroke-width="1"/>
<path d="M15 864 C17 862 19 865 21 863 C23 862 25 864 27 863" stroke="#101010" stroke-width="0.7" fill="none"/>
<rect x="13.5" y="873.5" width="15" height="3" fill="#fff" stroke="#101010" stroke-width="1"/>
<path d="M17 872 V868 M15.5 869.5 L17 867.5 L18.5 869.5 M25 867 V871 M23.5 869.5 L25 871.5 L26.5 869.5" stroke="#101010" stroke-width="1" fill="none"/>
<!-- lock -->
<path d="M445.5 894 V891.5 C445.5 887.5 451.5 887.5 451.5 891.5 V894" stroke="#101010" stroke-width="1.4" fill="none"/>
<rect x="443.5" y="894" width="10" height="7" fill="#101010"/>
<path d="M444 896.5h9 M444 898.5h9" stroke="#c8c8c8" stroke-width="0.8"/>
<!-- absolute -->
<rect x="468.5" y="888.5" width="14" height="14" fill="none" stroke="#101010" stroke-width="1.2"/>
<path d="M475.5 889 V902 M469 895.5 H482" stroke="#101010" stroke-width="0.5"/>
<circle cx="475.5" cy="895.5" r="2.2" fill="#101010"/>
<!-- key -->
<circle cx="853" cy="906.5" r="4.2" fill="none" stroke="#000" stroke-width="2.3"/>
<rect x="857" y="905" width="15" height="3" fill="#000"/>
<rect x="865" y="907" width="2.5" height="4.5" fill="#000"/><rect x="869.5" y="907" width="2.5" height="3.5" fill="#000"/>
<!-- playback -->
<g fill="#101010">
<rect x="1060" y="891" width="2" height="9"/><path d="M1062 895.5 L1068.5 891 V900Z M1068.5 895.5 L1075.5 891 V900Z"/>
<path d="M1088 895.5 L1094.5 891 V900Z"/><rect x="1095.5" y="891" width="2" height="9"/><rect x="1099" y="891" width="2" height="9"/>
<path d="M1114.5 891 L1121.5 895.5 L1114.5 900Z"/>
<rect x="1133" y="891" width="2" height="9"/><rect x="1136.5" y="891" width="2" height="9"/><path d="M1139.5 891 L1146 895.5 L1139.5 900Z"/>
<path d="M1158 891 L1164.5 895.5 L1158 900Z M1164.5 891 L1171.5 895.5 L1164.5 900Z"/><rect x="1172" y="891" width="2" height="9"/>
<rect x="1063" y="913" width="1.5" height="8"/><path d="M1064.5 917 L1068.5 913.5 V920.5Z M1073.5 917 L1069.5 913.5 V920.5Z"/><rect x="1073.5" y="913" width="1.5" height="8"/>
<path d="M1124 905 h3 v-3z M1202 928 h3 v-3z M1249 904 h3 v-3z M1272 904 h3 v-3z M1249 928 h3 v-3z"/>
</g>
<rect x="1110" y="889" width="14" height="13" fill="none" stroke="#101010" stroke-width="2"/>
<g fill="#8a8a8a"><rect x="1081" y="888" width="1" height="16"/><rect x="1153" y="888" width="1" height="16"/><rect x="1183" y="888" width="1" height="16"/><rect x="1081" y="910" width="1" height="17"/><rect x="1153" y="910" width="1" height="17"/><rect x="1183" y="910" width="1" height="17"/></g>
<!-- time config -->
<rect x="1159.5" y="911.5" width="9" height="10" fill="#f0f0f0" stroke="#101010" stroke-width="1"/>
<rect x="1159.5" y="911.5" width="9" height="2" fill="#101010"/>
<circle cx="1167.5" cy="918.5" r="4" fill="#f0d8dc" stroke="#c04858" stroke-width="1"/>
<path d="M1167.5 915.5 V920 M1165.5 918.5 L1167.5 920.5 L1169.5 918.5" stroke="#101010" stroke-width="1" fill="none"/>
<!-- nav -->
<circle cx="1193" cy="893" r="4.3" fill="#dde0ee" stroke="#101010" stroke-width="1.2"/>
<path d="M1196 896 L1201 901.5" stroke="#101030" stroke-width="2.2"/>
<rect x="1213.5" y="888.5" width="12" height="10" fill="#f0c0b0" stroke="#803030" stroke-width="1"/>
<path d="M1219.5 888.5 V898.5 M1213.5 893.5 H1225.5" stroke="#803030" stroke-width="1"/>
<circle cx="1214.5" cy="897" r="3.4" fill="#dde0ee" stroke="#101030" stroke-width="1.1"/>
<path d="M1217 899.5 L1220 902.5" stroke="#101030" stroke-width="1.6"/>
<path d="M1233.5 892 V888.5 H1237 M1245 888.5 H1248.5 V892 M1233.5 899 V902.5 H1237 M1245 902.5 H1248.5 V899" stroke="#101010" stroke-width="1.1" fill="none"/>
<path d="M1236 892 L1239 889.5 H1246 V897.5 L1243 900.5 H1236Z" fill="#c8c8dc" stroke="#1a1a60" stroke-width="1"/>
<path d="M1236 892 H1243 V900.5 M1243 892 L1246 889.5" stroke="#1a1a60" stroke-width="1" fill="none"/>
<rect x="1259.5" y="888.5" width="12" height="10" fill="#f0c0b0" stroke="#803030" stroke-width="1"/>
<path d="M1265.5 888.5 V898.5 M1259.5 893.5 H1271.5" stroke="#803030" stroke-width="1"/>
<path d="M1256.5 895 L1258.5 893.5 H1265 V901 L1263 902.5 H1256.5Z" fill="#d0d0e4" stroke="#1a1a60" stroke-width="1"/>
<path d="M1256.5 895 H1263 V902.5" stroke="#1a1a60" stroke-width="1" fill="none"/>
<path d="M1187.5 910.5 L1202.5 917.5 L1187.5 924.5" stroke="#101010" stroke-width="1.4" fill="#d8d8d8"/>
<path d="M1193 914 C1191 916 1191 919 1193 921" stroke="#101010" stroke-width="1.2" fill="none"/>
<path d="M1213 918 C1211 916 1210.5 914.5 1212 914 L1215 916 L1214 911.5 C1214 910 1216 910 1216.5 911.5 L1217.5 915 L1217.5 910.5 C1218 909.5 1219.5 909.5 1220 910.5 L1220.5 915 L1221.5 911 C1222 910 1223.5 910.5 1223.5 911.5 L1223.5 916 C1225 914 1226 915 1225.5 916 L1223 921.5 L1221 924.5 H1215.5 Z" fill="#e8e8e8" stroke="#101010" stroke-width="1"/>
<circle cx="1240" cy="918.5" r="4.5" fill="#d0d0e4" stroke="#101010" stroke-width="1.1"/>
<path d="M1240 910 V918.5 L1248 918.5 M1240 918.5 L1233.5 925" stroke="#101010" stroke-width="1" fill="none"/>
<path d="M1238 912 L1240 909.5 L1242 912 M1247 916.5 L1249.5 918.5 L1247 920.5" stroke="#101010" stroke-width="1" fill="none"/>
<rect x="1264.5" y="917.5" width="7" height="7" fill="#d0d0d8" stroke="#101010" stroke-width="1.1"/>
<rect x="1257.5" y="910.5" width="11" height="11" fill="#d0d0e4" stroke="#1a1a60" stroke-width="1.1"/>
<path d="M1260 913 L1266 919 M1260 913 h2.5 M1260 913 v2.5" stroke="#101010" stroke-width="1" fill="none"/>
</svg>


<svg style="left:0;top:0" width="1280" height="960">
<!-- Selected arrow -->
<path d="M1038.5 894 h8 l-4 4z" fill="#000"/>
<!-- start flag -->
<g>
<path d="M10 942 h4 M9.5 944.5 h4 M9 947 h4 M9 949.5 h4 M9 952 h4" stroke="#404040" stroke-width="1" stroke-dasharray="1 1"/>
<path d="M8 945 h5 M8 948 h5 M8 951 h5" stroke="#e04040" stroke-width="1.2" stroke-dasharray="1.5 1"/>
<path d="M13 941 C15 940 17 940 22 941 L22 953 C17 952 15 952 13 953 Z" fill="#101010"/>
<rect x="14" y="942" width="3.5" height="4.5" fill="#e02020"/><rect x="18.5" y="942" width="3" height="4.5" fill="#20b020"/>
<rect x="14" y="947.5" width="3.5" height="4.5" fill="#2030d0"/><rect x="18.5" y="947.5" width="3" height="4.5" fill="#f0e020"/>
</g>
<path transform="translate(24 941) scale(0.95)" d="M0.5 1.5H10.5 M0 5.5H11 M4 1.5V7C4 9 2 10.5 0.5 11 M8 1.5V11" stroke="#000" stroke-width="1.368" fill="none"/><path transform="translate(36 941) scale(0.95)" d="M1.5 0L0.5 6L4.5 10.5 M0 4.5H5 M4 2.5L1.5 11 M8 0L6 4H10 M10 1.5L10.5 3.5 M6.5 6H10.5V10.5H6.5Z" stroke="#000" stroke-width="1.368" fill="none"/>
<path transform="translate(335 941) scale(0.9)" d="M2 3H10 M0.5 5.5H11.5 M6 0.5V11.5 M6 6L1 11 M6 6L11 11" stroke="#000" stroke-width="1.444" fill="none"/><path transform="translate(346 941) scale(0.9)" d="M6 0.5L0.5 5 M6 0.5L11.5 5 M3.5 4.5H8.5 M1.5 6.5H5V10H1.5Z M7 6.5H10.5V10 M7 6.5V11.5" stroke="#000" stroke-width="1.444" fill="none"/><path transform="translate(358 941) scale(0.9)" d="M4.5 0.5L1.5 4 M3.5 2H9L3.5 7.5 M3 4L6.5 6 M3.5 6.5H10.5V11H3.5Z" stroke="#000" stroke-width="1.444" fill="none"/>
<path d="M375 947.5 H379" stroke="#000" stroke-width="1"/>
<path transform="translate(382 941) scale(0.9)" d="M0.5 1H11.5 M1 3.5V11H11V3.5 M3.5 3.5H8.5V8.5H3.5Z M6 3.5V8.5 M3.5 6H8.5" stroke="#000" stroke-width="1.444" fill="none"/><path transform="translate(393 941) scale(0.9)" d="M1 0.5H11V11.5H1Z M5 2L3 5 M4.5 3H8L4 7.5 M5.5 5L9 8 M5 8.5L7 9 M4.5 10L7 10.5" stroke="#000" stroke-width="1.444" fill="none"/>
<!-- quick launch -->
<rect x="69.5" y="939.5" width="15" height="12" rx="2" fill="#1a8aa8" stroke="#0a3048" stroke-width="1"/>
<rect x="72" y="941.5" width="10" height="3" fill="#e8f0f8"/>
<path d="M72 947h1M74 947h1M76 947h1M78 947h1M80 947h1M72 949h1M74 949h1M76 949h1M78 949h1M80 949h1" stroke="#e8f0f8" stroke-width="1"/>
<rect x="92" y="938.5" width="15" height="15" fill="#909090"/>
<path d="M92 941 C97 939 103 940 107 945 L107 953.5 H92Z" fill="#6a6a6a"/>
<ellipse cx="100" cy="948.5" rx="4.5" ry="2.5" fill="#40b040"/>
<circle cx="100" cy="948.5" r="1.3" fill="#e0ffe0"/>
<ellipse cx="122.5" cy="943" rx="4.5" ry="5" fill="#101010"/>
<ellipse cx="122.5" cy="949" rx="5.5" ry="4.5" fill="#f4f4f4" stroke="#101010" stroke-width="0.8"/>
<path d="M117.5 946.5 C120 948 125 948 127.5 946.5 L127 949 C124 951 120 951 118 949Z" fill="#e02020"/>
<circle cx="121" cy="942" r="1" fill="#fff"/><circle cx="124" cy="942" r="1" fill="#fff"/>
<path d="M119 953.5 h3 M123 953.5 h3" stroke="#f0a020" stroke-width="1.5"/>
<!-- task icons -->
<rect x="155" y="939" width="15" height="14" fill="#404040"/>
<rect x="156.5" y="940.5" width="12" height="11" fill="#8a8a8a" stroke="#d0d0d0" stroke-width="1"/>
<path d="M159 942 L162.5 945.5 L166 942 M162.5 945.5 V951" stroke="#f8f8f8" stroke-width="1.8" fill="none"/>
<path d="M318 947 h10 v8 h-10z" fill="#f0f0f0" stroke="#101010" stroke-width="1"/>
<rect x="324" y="941" width="7" height="14" fill="#f8f8f8" stroke="#101010" stroke-width="1"/>
<path d="M318 942 L322 947 M321 940 L323 946 M325 940 L323 946" stroke="#2020c0" stroke-width="1.3"/>
<path d="M319 944 L323 947" stroke="#e02020" stroke-width="1.3"/><path d="M326 942 L324 947" stroke="#e0c020" stroke-width="1.3"/>
<!-- tray -->
<path d="M1116 944 H1119 L1124 939.5 V954 L1119 950 H1116Z" fill="#e8e060" stroke="#303010" stroke-width="0.9"/>
<path d="M1127 945 L1130 943 M1127 947 H1131 M1127 949 L1130 951" stroke="#a0a0a0" stroke-width="0.8"/>
<rect x="1134" y="939" width="16" height="15.5" fill="#101a80"/>
<circle cx="1142" cy="946.8" r="2" fill="#f0e040"/>
<path d="M1138.5 943 C1137 945 1137 948.5 1138.5 950.5 M1145.5 943 C1147 945 1147 948.5 1145.5 950.5 M1136.5 941.5 C1134.5 944.5 1134.5 949 1136.5 952 M1147.5 941.5 C1149.5 944.5 1149.5 949 1147.5 952" stroke="#e8e8e8" stroke-width="0.9" fill="none"/>
<rect x="1153" y="943" width="8" height="7" fill="#f0f0f0" stroke="#101010" stroke-width="1"/>
<rect x="1159" y="940" width="8" height="7" fill="#d8d8d8" stroke="#101010" stroke-width="1"/>
<path d="M1153 951.5 H1162 M1159 948.5 H1168" stroke="#101010" stroke-width="1.5"/>
<path d="M1171.5 940.5 C1175 941 1180 941 1184 940.5 C1184.5 947 1182 952 1177.8 954.5 C1173.5 952 1171 947 1171.5 940.5Z" fill="#c01818" stroke="#101010" stroke-width="1"/>
<path d="M1177.8 943 V951 M1174.5 946 H1181" stroke="#fff" stroke-width="1.8"/>
<ellipse cx="1196" cy="944" rx="4.5" ry="5" fill="#101010"/>
<ellipse cx="1196" cy="949.5" rx="5.5" ry="4.5" fill="#f4f4f4" stroke="#101010" stroke-width="0.8"/>
<path d="M1191 947 C1193 949 1199 949 1201 947 L1200.5 950 C1198 952 1194 952 1191.5 950Z" fill="#e02020"/>
<path d="M1192 954 h3 M1197 954 h3" stroke="#f0a020" stroke-width="1.5"/>
<rect x="1206" y="939" width="16" height="15.5" fill="#000"/>
<text x="1207" y="951.5" font-family="Liberation Sans" font-size="11.5" fill="#fff" letter-spacing="-0.8">CH</text>
</svg>

</body></html>
